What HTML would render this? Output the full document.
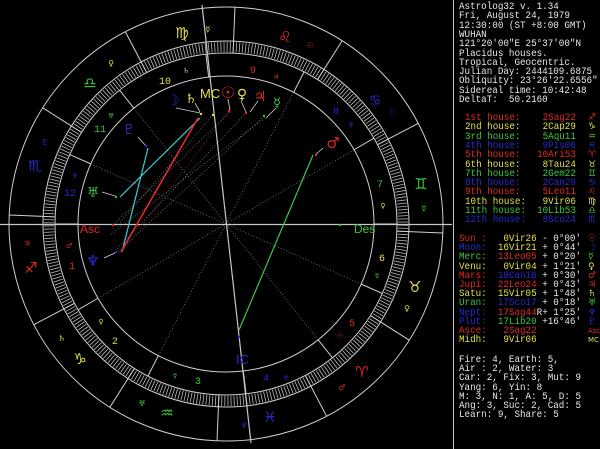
<!DOCTYPE html>
<html><head><meta charset="utf-8">
<style>
html,body{margin:0;padding:0;background:#000;width:600px;height:449px;overflow:hidden}
svg{position:absolute;left:0;top:0}
#p{position:absolute;left:0;top:0;width:600px;height:449px;font-family:"Liberation Mono","DejaVu Sans Mono",monospace;font-size:10.5px;color:#d8d8d8;white-space:pre}
.l{position:absolute;white-space:pre;transform:scaleX(0.88);transform-origin:0 0;line-height:10px}
.gl{position:absolute;left:588px;font-family:"DejaVu Sans",sans-serif;font-size:9px;line-height:10px}
.r{color:#e02828}.y{color:#e0e048}.g{color:#3cc83c}.b{color:#2828d0}.w{color:#e8e8e8}
</style></head><body>
<svg id="s" width="600" height="449" viewBox="0 0 600 449">
<line x1="453.5" y1="0" x2="453.5" y2="449" stroke="#c8c8c8" stroke-width="1"/>
<g id="c"></g>
</svg>
<div id="p"></div>
<script>
var cx=226,cy=224,asc=242.37;
var NS="http://www.w3.org/2000/svg",G=document.getElementById('c');
function el(t,a,txt){var e=document.createElementNS(NS,t);for(var k in a)e.setAttribute(k,a[k]);if(txt)e.textContent=txt;G.appendChild(e);return e;}
function pt(lon,r){var th=(180+lon-asc)*Math.PI/180;return [cx+r*Math.cos(th),cy-r*Math.sin(th)];}
var W="#d0d0d0";
[217,183,171,148].forEach(function(r){el('circle',{cx:cx,cy:cy,r:r,fill:'none',stroke:W,'stroke-width':1});});
for(var i=0;i<360;i++){var a=pt(i,172),b=pt(i,182);el('line',{x1:a[0],y1:a[1],x2:b[0],y2:b[1],stroke:'#bbb','stroke-width':0.8});}
for(var i=0;i<12;i++){var a=pt(i*30,171),b=pt(i*30,217);el('line',{x1:a[0],y1:a[1],x2:b[0],y2:b[1],stroke:W,'stroke-width':1});}
var H=[242.37,272.48,305.18,339.1,10.88,38.4,62.37,92.48,125.18,159.1,190.88,218.4];
H.forEach(function(h,i){var a=pt(h,148),b=pt(h,171);el('line',{x1:a[0],y1:a[1],x2:b[0],y2:b[1],stroke:W,'stroke-width':1});
 if(i%3!=0){var c=pt(h,0);el('line',{x1:a[0],y1:a[1],x2:c[0],y2:c[1],stroke:'#888','stroke-width':0.7,'stroke-dasharray':'1 2'});}});
el('line',{x1:0,y1:224.5,x2:452,y2:224.5,stroke:'#c8c8c8','stroke-width':1.2});
el('line',{x1:202,y1:5,x2:251,y2:443,stroke:'#c8c8c8','stroke-width':1.2});
function ln(x1,y1,x2,y2,c,w,d){var a={x1:x1,y1:y1,x2:x2,y2:y2,stroke:c,'stroke-width':w};if(d)a['stroke-dasharray']=d;el('line',a);}
ln(148,148,122,252,'#40c8d0',1.2);ln(200,118,120,197,'#40c8d0',1.2);
ln(198,118,121,252,'#e02828',1.6);ln(228,112,122,252,'#a02020',0.8,'1 2');
ln(313,155,239,330,'#3cc83c',1.2);
ln(246,113,116,250,'#888',0.7,'1 2');ln(264,116,118,252,'#888',0.7,'1 2');ln(213,115,118,225,'#888',0.7,'1 2');
ln(230,112,113,225,'#888',0.7,'1 2');ln(265,118,110,235,'#888',0.7,'1 2');
ln(176,108,200,113,W,0.8);ln(195,103,200,112,W,0.8);ln(228,99,230,110,W,0.8);ln(241,101,246,112,W,0.8);ln(258,101,250,112,W,0.8);ln(276,108,266,118,W,0.8);
ln(138,137,146,146,W,0.8);ln(102,192,115,196,W,0.8);ln(104,258,117,252,W,0.8);ln(323,148,315,155,W,0.8);
function tx(x,y,s,c,fs,fw){el('text',{x:x,y:y,fill:c,'font-size':fs||11,'font-family':'DejaVu Sans, sans-serif','text-anchor':'middle','font-weight':fw||'normal'},s);}
var R="#e02828",Y="#e0e048",Gr="#3cc83c",B="#2828d0";
tx(182,38,'♍',Y,15);tx(285,42,'♌',R,15);tx(375,105,'♋',B,14);tx(421,189,'♊',Gr,15);tx(415,292,'♉',Y,15);tx(362,377,'♈',R,15);
tx(270,422,'♓',B,15);tx(167,418,'♒',Gr,15);tx(80,364,'♑',Y,15);tx(31,273,'♐',R,15);tx(35,171,'♏',B,15);tx(90,88,'♎',Gr,15);
tx(208,32,'☿',Y,8);tx(310,48,'☉',R,8);tx(390,115,'☽',B,8);tx(424,211,'☿',Gr,8);tx(407,311,'♀',Y,8);tx(342,390,'♂',R,8);
tx(244,428,'♆',B,8);tx(142,406,'♅',Gr,8);tx(62,341,'♄',Y,8);tx(27,246,'♃',R,8);tx(45,145,'♇',B,8);tx(111,66,'♀',Y,8);
tx(186,73,'♄',Y,7);tx(276,79,'♃',R,7);tx(351,127,'♆',B,7);tx(383,208,'♀',Y,7);tx(377,278,'☿',Gr,7);tx(340,338,'☉',R,7);
tx(286,380,'♆',B,7);tx(175,378,'☿',Gr,7);tx(101,324,'♀',Y,7);tx(69,248,'♂',R,7);tx(75,178,'♆',B,7);tx(111,118,'♅',Gr,7);
function hn(x,y,s,c){el('text',{x:x,y:y,fill:c,'font-size':10,'font-family':'Liberation Mono, monospace','text-anchor':'middle'},s);}
hn(165,84,'10',Y);hn(253,73,'9',R);hn(336,114,'8',B);hn(380,187,'7',Gr);hn(382,261,'6',Y);hn(352,326,'5',R);
hn(266,381,'4',B);hn(198,384,'3',Gr);hn(115,344,'2',Y);hn(72,269,'1',R);hn(70,196,'12',B);hn(100,132,'11',Gr);
tx(173,105,'☽',B,14);tx(191,103,'♄',Y,13);tx(228,98,'☉',R,16);tx(242,99,'♀',Y,14);tx(260,101,'♃',R,14);tx(277,107,'☿',Gr,13);
tx(333,148,'♂',R,15);tx(93,197,'♅',Gr,14);tx(129,134,'♇',B,14);tx(93,266,'♆',B,15);
el('text',{x:200,y:98,fill:Y,'font-size':13,'font-family':'Liberation Sans,sans-serif'},'MC');
el('text',{x:80,y:233,fill:R,'font-size':12,'font-family':'Liberation Sans,sans-serif'},'Asc');
el('text',{x:354,y:233,fill:Gr,'font-size':12,'font-family':'Liberation Sans,sans-serif'},'Des');
el('text',{x:236,y:364,fill:B,'font-size':13,'font-family':'Liberation Sans,sans-serif'},'IC');
[[201,114,Y],[213,115,Y],[229,111,R],[246,113,R],[264,116,Gr],[316,155,R],[146,146,B],[116,197,Gr],[116,252,B],[113,225,R],[340,225,Gr],[239,337,B]].forEach(function(d){el('circle',{cx:d[0],cy:d[1],r:1.2,fill:d[2]});});

var P=document.getElementById('p'),h='';
function L(x,y,html){h+='<div class="l" style="left:'+x+'px;top:'+y+'px">'+html+'</div>';}
function GL(y,cls,s){h+='<div class="gl '+cls+'" style="top:'+y+'px">'+s+'</div>';}
var hdr=["Astrolog32 v. 1.34","Fri, August 24, 1979","12:30:00 (ST +8:00 GMT)","WUHAN","121°20'00\"E 25°37'00\"N","Placidus houses.","Tropical, Geocentric.","Julian Day: 2444109.6875","Obliquity: 23°26'22.6556\"","Sidereal time: 10:42:48","DeltaT:  50.2160"];
hdr.forEach(function(s,i){L(459,2+i*9.3,'<span class="w">'+s+'</span>');});
var hs=[["1st","2Sag22","r","♐"],["2nd","2Cap29","y","♑"],["3rd","5Aqu11","g","♒"],["4th","9Pis06","b","♓"],["5th","10Ari53","r","♈"],["6th","8Tau24","y","♉"],["7th","2Gem22","g","♊"],["8th","2Can29","b","♋"],["9th","5Leo11","r","♌"],["10th","9Vir06","y","♍"],["11th","10Lib53","g","♎"],["12th","8Sco24","b","♏"]];
hs.forEach(function(x,i){var nm=(x[0]+" house:");while(nm.length<12)nm+=' ';var v=x[1];while(v.length<8)v=' '+v;
 L(465,113+i*9.3,'<span class="'+x[2]+'">'+nm+v+'</span>');GL(113+i*9.3,x[2],x[3]);});
var pl=[["Sun :","r"," 0Vir26","y","- 0°00'","☉"],["Moon:","b","16Vir21","y","+ 0°44'","☽"],["Merc:","g","13Leo05","r","+ 0°20'","☿"],["Venu:","y"," 0Vir04","y","+ 1°21'","♀"],["Mars:","r","18Can16","b","+ 0°30'","♂"],["Jupi:","r","22Leo24","r","+ 0°43'","♃"],["Satu:","y","15Vir05","y","+ 1°48'","♄"],["Uran:","g","17Sco17","b","+ 0°18'","♅"],["Nept:","b","17Sag44","r","+ 1°25'","♆"],["Plut:","b","17Lib20","g","+16°46'","♇"],["Asce:","r"," 2Sag22","r","","Asc"],["Midh:","y"," 9Vir06","y","","MC"]];
pl.forEach(function(x,i){var g=x[5].length>1?'<span style="font-size:7px">'+x[5]+'</span>':x[5];
 L(459,234+i*9.2,'<span class="'+x[1]+'">'+x[0]+'</span>  <span class="'+x[3]+'">'+x[2]+'</span>'+(i==8?'<span class="w">R</span>':' ')+'<span class="w">'+x[4]+'</span>');GL(234+i*9.2,x[1],g);});
var bt=["Fire: 4, Earth: 5,","Air : 2, Water: 3","Car: 2, Fix: 3, Mut: 9","Yang: 6, Yin: 8","M: 3, N: 1, A: 5, D: 5","Ang: 3, Suc: 2, Cad: 5","Learn: 9, Share: 5"];
bt.forEach(function(s,i){L(459,355+i*9.2,'<span class="w">'+s+'</span>');});
P.innerHTML=h;
</script>
</body></html>
